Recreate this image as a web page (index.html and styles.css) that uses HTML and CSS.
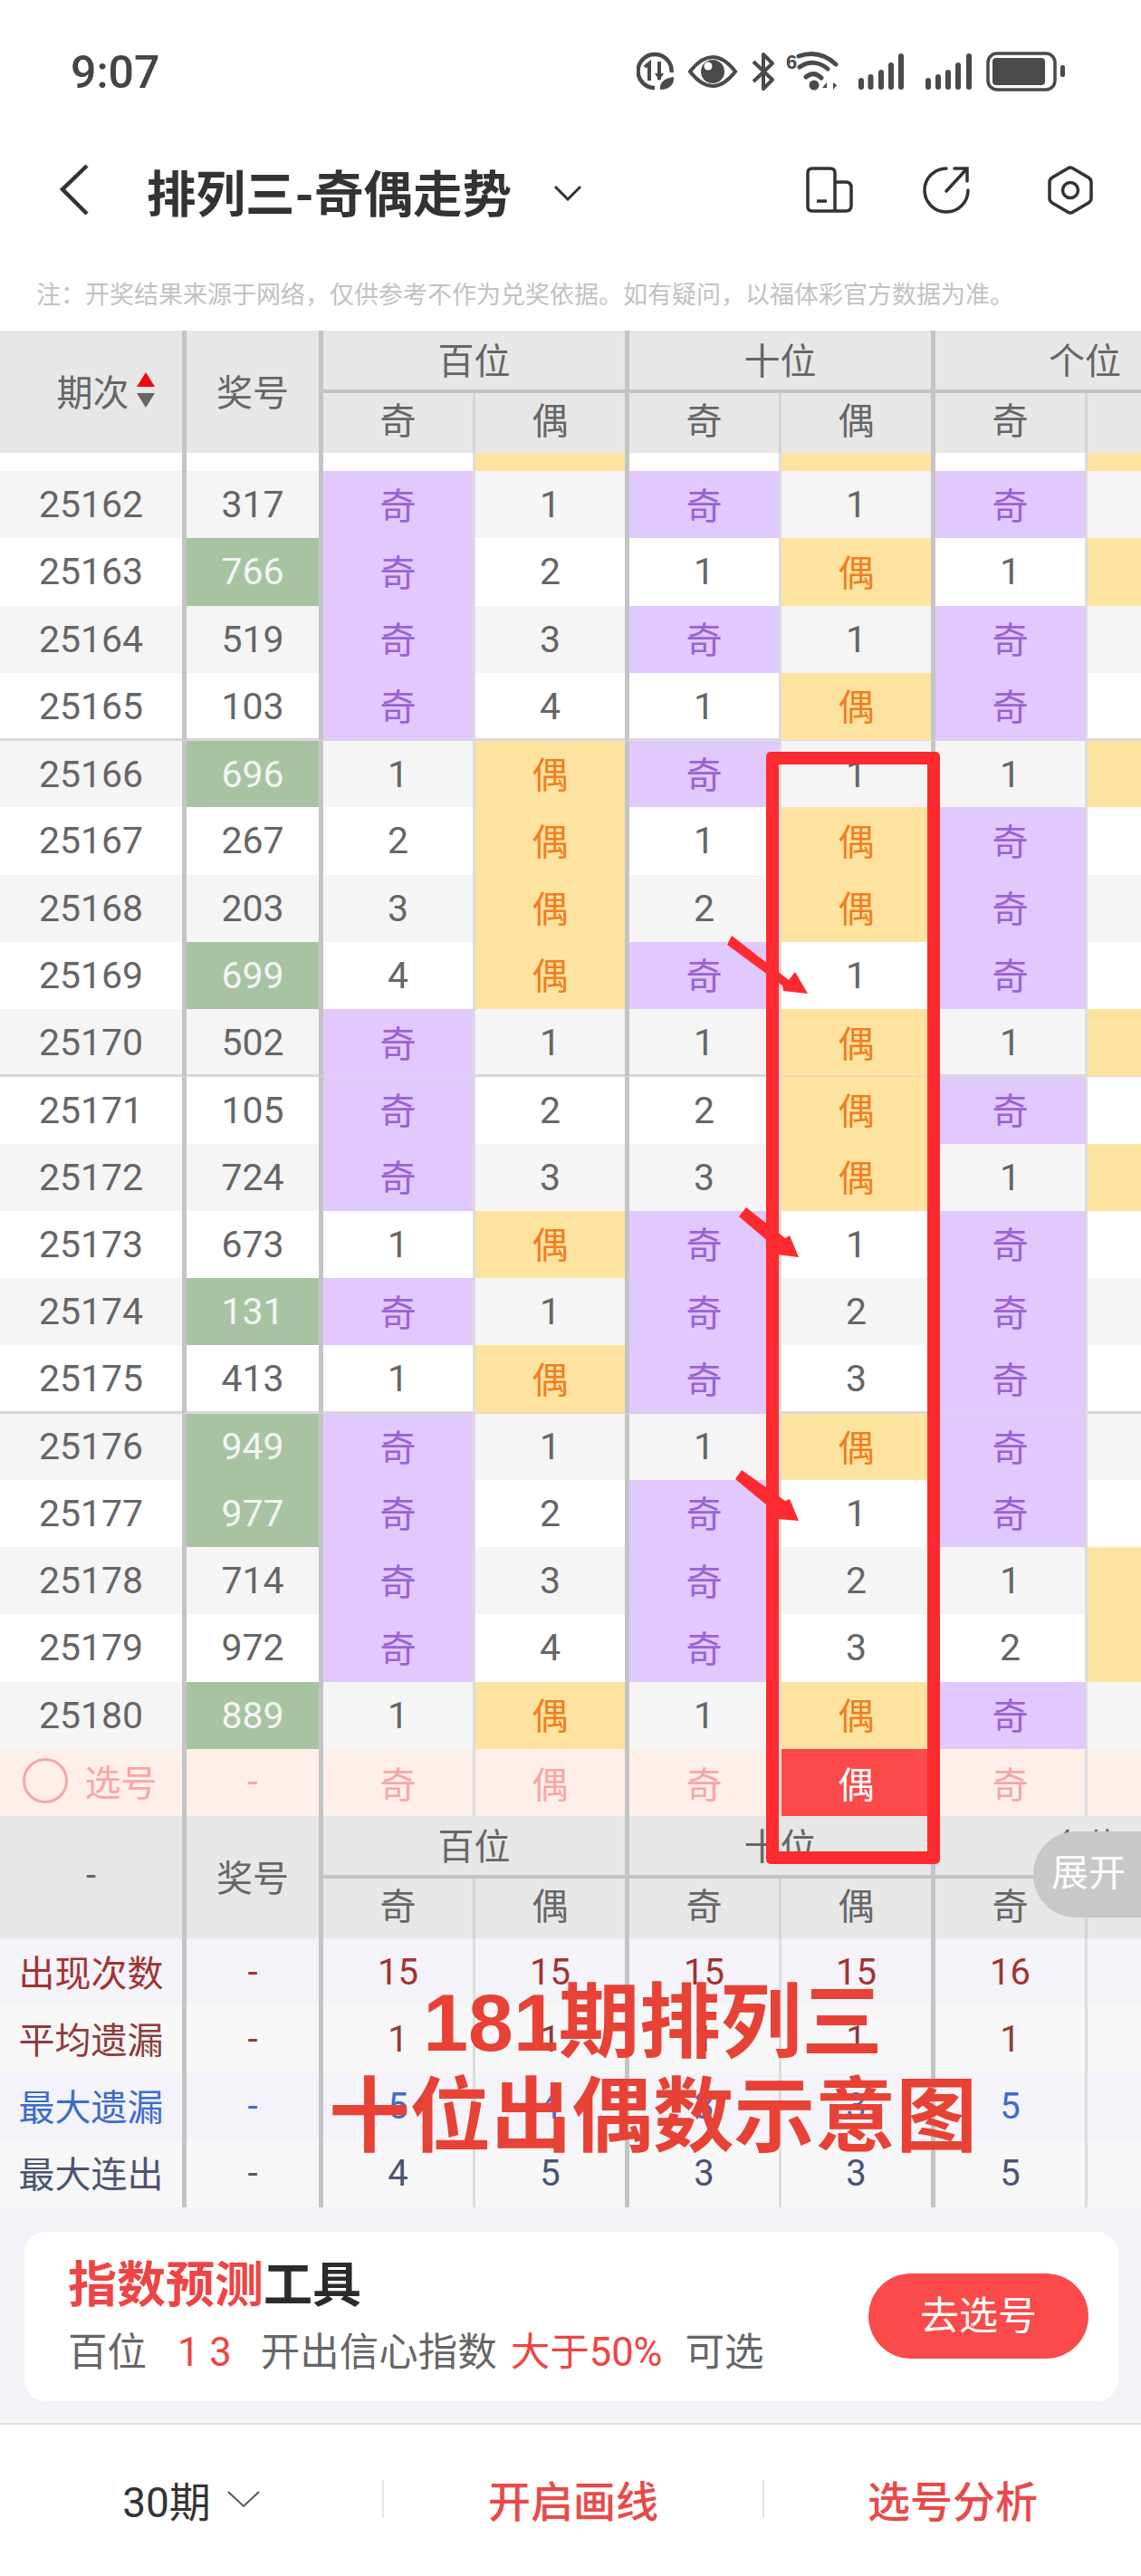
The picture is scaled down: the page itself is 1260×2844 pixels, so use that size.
FILE: index.html
```html
<!DOCTYPE html>
<html lang="zh-CN">
<head>
    <meta charset="UTF-8">
    <meta name="viewport" content="width=device-width, initial-scale=1.0">
    <title>排列三-奇偶走势</title>
    <link rel="stylesheet" href="styles.css">
</head>
<body>
    <div class="status-bar">
        <span class="clock">9:07</span>
        <svg class="status-icons" viewBox="703 54 475 46" width="475" height="46">
            <!-- data saver -->
            <path d="M723 96 A18.5 18.5 0 1 1 741.5 79" fill="none" stroke="#4a4a4a" stroke-width="4.5"/>
            <path d="M712 73 L717 69 V88 M728 67 V87" fill="none" stroke="#4a4a4a" stroke-width="4"/>
            <path d="M723 80 H733 L728 88Z" fill="#4a4a4a"/>
            <path d="M729 98 C728 90 734 85 744 84 C745 92 739 98 729 98Z" fill="#4a4a4a"/>
            <!-- eye -->
            <path d="M762 78 C772 65 780 62 787 62 C794 62 802 65 812 78 C802 91 794 94 787 94 C780 94 772 91 762 78Z" fill="none" stroke="#4a4a4a" stroke-width="4"/>
            <circle cx="787" cy="78" r="13" fill="#4a4a4a"/>
            <circle cx="782" cy="72" r="4.5" fill="#fff"/>
            <!-- bluetooth -->
            <path d="M832 67 L853 87 L843 97 V80 M832 89 L853 69 L843 59 V76" fill="none" stroke="#4a4a4a" stroke-width="4" stroke-linejoin="round"/>
            <!-- wifi -->
            <text x="868" y="75" class="wifi-six">6</text>
            <path d="M882 61 C897 56 911 59 923 70 M883 73 C893 66 905 67 914 75 M890 84 C896 79 902 80 907 85" fill="none" stroke="#4a4a4a" stroke-width="5" stroke-linecap="round"/>
            <circle cx="899" cy="93" r="5.5" fill="#4a4a4a"/>
            <path d="M908 96 L913 90 V96Z M917 90 V98 M920 90 V98 L924 93Z" fill="#4a4a4a"/>
            <!-- signal -->
            <g fill="#4a4a4a">
                <rect x="948" y="85" width="6" height="13" rx="3"/>
                <rect x="958.5" y="81" width="6" height="17" rx="3"/>
                <rect x="970" y="76" width="6" height="22" rx="3"/>
                <rect x="981" y="68" width="6" height="30" rx="3"/>
                <rect x="992" y="58" width="6" height="40" rx="3"/>
                <rect x="1022" y="85" width="6" height="13" rx="3"/>
                <rect x="1033" y="81" width="6" height="17" rx="3"/>
                <rect x="1044" y="76" width="6" height="22" rx="3"/>
                <rect x="1055" y="68" width="6" height="30" rx="3"/>
                <rect x="1067" y="58" width="6" height="40" rx="3"/>
            </g>
            <!-- battery -->
            <rect x="1091" y="58" width="74" height="40" rx="10" fill="none" stroke="#4a4a4a" stroke-width="3.5"/>
            <rect x="1096" y="63" width="58" height="30" rx="4" fill="#4a4a4a"/>
            <rect x="1171" y="71" width="5" height="13" rx="2" fill="#4a4a4a"/>
        </svg>
    </div>

    <div class="nav-bar">
        <svg class="nav-back" viewBox="0 0 34 58" width="34" height="58">
            <path d="M31 2 L4 28 L31 55" fill="none" stroke="#333" stroke-width="4.5"/>
        </svg>
        <h1 class="nav-title">排列三-奇偶走势</h1>
        <svg class="nav-caret" viewBox="0 0 32 18" width="32" height="18">
            <path d="M2 2 L16 16 L30 2" fill="none" stroke="#333" stroke-width="3"/>
        </svg>
        <div class="nav-actions">
            <svg viewBox="889 186 54 54" width="54" height="54">
                <path d="M922 204 H934 Q940 204 940 210 V230 Q940 236 934 236 H897 Q892 236 892 231 V194 Q892 189 897 189 H917 Q922 189 922 194 V236" fill="none" stroke="#333" stroke-width="3.5"/>
                <path d="M902 225 H913" stroke="#333" stroke-width="3.5"/>
            </svg>
            <svg class="nav-share" viewBox="1018 186 54 54" width="54" height="54">
                <path d="M1045 189 A24 24 0 1 0 1069 213" fill="none" stroke="#333" stroke-width="3.5" stroke-linecap="round"/>
                <path d="M1045 214 L1068 189 M1054 189 H1068 V203" fill="none" stroke="#333" stroke-width="3.5" stroke-linecap="round"/>
            </svg>
            <svg viewBox="1155 184 54 56" width="54" height="56">
                <path d="M1179 188 Q1182 186 1185 188 L1202 198 Q1205 200 1205 203 V221 Q1205 224 1202 226 L1185 236 Q1182 238 1179 236 L1162 226 Q1159 224 1159 221 V203 Q1159 200 1162 198Z" fill="none" stroke="#333" stroke-width="3.5"/>
                <circle cx="1182" cy="212" r="8.5" fill="none" stroke="#333" stroke-width="3.5"/>
            </svg>
        </div>
    </div>

    <p class="note">注：开奖结果来源于网络，仅供参考不作为兑奖依据。如有疑问，以福体彩官方数据为准。</p>

    <div class="chart">
        <div class="head">
            <div class="head-side head-sort">期次<span class="sort"><i class="sort-up"></i><i class="sort-down"></i></span></div>
            <div class="head-side">奖号</div>
            <div class="head-group"><div class="group-name">百位</div><div class="group-sub"><span>奇</span><span>偶</span></div></div>
            <div class="head-group"><div class="group-name">十位</div><div class="group-sub"><span>奇</span><span>偶</span></div></div>
            <div class="head-group group-last"><div class="group-name">个位</div><div class="group-sub"><span>奇</span><span></span></div></div>
        </div>

        <div class="rows">
            <div class="row row-cut"><div></div><div></div><div></div><div class="even"></div><div></div><div class="even"></div><div></div><div class="even"></div></div>
            <div class="row"><div>25162</div><div>317</div><div class="odd">奇</div><div>1</div><div class="odd">奇</div><div>1</div><div class="odd">奇</div><div></div></div>
            <div class="row"><div>25163</div><div class="hit">766</div><div class="odd">奇</div><div>2</div><div>1</div><div class="even">偶</div><div>1</div><div class="even"></div></div>
            <div class="row"><div>25164</div><div>519</div><div class="odd">奇</div><div>3</div><div class="odd">奇</div><div>1</div><div class="odd">奇</div><div></div></div>
            <div class="row"><div>25165</div><div>103</div><div class="odd">奇</div><div>4</div><div>1</div><div class="even">偶</div><div class="odd">奇</div><div></div></div>
            <div class="row row-split"><div>25166</div><div class="hit">696</div><div>1</div><div class="even">偶</div><div class="odd">奇</div><div>1</div><div>1</div><div class="even"></div></div>
            <div class="row"><div>25167</div><div>267</div><div>2</div><div class="even">偶</div><div>1</div><div class="even">偶</div><div class="odd">奇</div><div></div></div>
            <div class="row"><div>25168</div><div>203</div><div>3</div><div class="even">偶</div><div>2</div><div class="even">偶</div><div class="odd">奇</div><div></div></div>
            <div class="row"><div>25169</div><div class="hit">699</div><div>4</div><div class="even">偶</div><div class="odd">奇</div><div>1</div><div class="odd">奇</div><div></div></div>
            <div class="row"><div>25170</div><div>502</div><div class="odd">奇</div><div>1</div><div>1</div><div class="even">偶</div><div>1</div><div class="even"></div></div>
            <div class="row row-split"><div>25171</div><div>105</div><div class="odd">奇</div><div>2</div><div>2</div><div class="even">偶</div><div class="odd">奇</div><div></div></div>
            <div class="row"><div>25172</div><div>724</div><div class="odd">奇</div><div>3</div><div>3</div><div class="even">偶</div><div>1</div><div class="even"></div></div>
            <div class="row"><div>25173</div><div>673</div><div>1</div><div class="even">偶</div><div class="odd">奇</div><div>1</div><div class="odd">奇</div><div></div></div>
            <div class="row"><div>25174</div><div class="hit">131</div><div class="odd">奇</div><div>1</div><div class="odd">奇</div><div>2</div><div class="odd">奇</div><div></div></div>
            <div class="row"><div>25175</div><div>413</div><div>1</div><div class="even">偶</div><div class="odd">奇</div><div>3</div><div class="odd">奇</div><div></div></div>
            <div class="row row-split"><div>25176</div><div class="hit">949</div><div class="odd">奇</div><div>1</div><div>1</div><div class="even">偶</div><div class="odd">奇</div><div></div></div>
            <div class="row"><div>25177</div><div class="hit">977</div><div class="odd">奇</div><div>2</div><div class="odd">奇</div><div>1</div><div class="odd">奇</div><div></div></div>
            <div class="row"><div>25178</div><div>714</div><div class="odd">奇</div><div>3</div><div class="odd">奇</div><div>2</div><div>1</div><div class="even"></div></div>
            <div class="row"><div>25179</div><div>972</div><div class="odd">奇</div><div>4</div><div class="odd">奇</div><div>3</div><div>2</div><div class="even"></div></div>
            <div class="row"><div>25180</div><div class="hit">889</div><div>1</div><div class="even">偶</div><div>1</div><div class="even">偶</div><div class="odd">奇</div><div></div></div>
        </div>

        <div class="row row-pick">
            <div class="pick-label"><i class="pick-circle"></i>选号</div>
            <div>-</div><div>奇</div><div>偶</div><div>奇</div><div class="picked">偶</div><div>奇</div><div></div>
        </div>

        <div class="head head-foot">
            <div class="head-side">-</div>
            <div class="head-side">奖号</div>
            <div class="head-group"><div class="group-name">百位</div><div class="group-sub"><span>奇</span><span>偶</span></div></div>
            <div class="head-group"><div class="group-name">十位</div><div class="group-sub"><span>奇</span><span>偶</span></div></div>
            <div class="head-group group-last"><div class="group-name">个位</div><div class="group-sub"><span>奇</span><span></span></div></div>
        </div>

        <div class="row stat stat-count"><div>出现次数</div><div>-</div><div>15</div><div>15</div><div>15</div><div>15</div><div>16</div><div></div></div>
        <div class="row stat stat-avg"><div>平均遗漏</div><div>-</div><div>1</div><div>1</div><div>1</div><div>1</div><div>1</div><div></div></div>
        <div class="row stat stat-max"><div>最大遗漏</div><div>-</div><div>5</div><div>4</div><div>3</div><div>3</div><div>5</div><div></div></div>
        <div class="row stat stat-run"><div>最大连出</div><div>-</div><div>4</div><div>5</div><div>3</div><div>3</div><div>5</div><div></div></div>
    </div>

    <div class="tool-area">
        <div class="tool-card">
            <div class="tool-text">
                <div class="tool-title"><em>指数预测</em>工具</div>
                <div class="tool-desc">百位<em class="tool-nums">1 3</em>开出信心指数<em class="tool-rate">大于50%</em>可选</div>
            </div>
            <div class="tool-btn">去选号</div>
        </div>
    </div>

    <div class="bottom-bar">
        <div class="bottom-item">30期
            <svg viewBox="0 0 36 20" width="36" height="20"><path d="M1 2 L18 18 L35 2" fill="none" stroke="#555" stroke-width="2"/></svg>
        </div>
        <div class="bottom-item bottom-red">开启画线</div>
        <div class="bottom-item bottom-red">选号分析</div>
    </div>

    <!-- marks drawn on top of the screenshot -->
    <div class="expand-tab">展开</div>
    <div class="mark-box"></div>
    <svg class="mark-arrows" viewBox="0 0 1260 2844" width="1260" height="2844">
        <path d="M808 1033 L871 1082 L878 1073 L892 1097 L865 1094 L864 1088 L803 1043Z"/>
        <path d="M824 1333 L867 1367 L872 1364 L882 1388 L858 1385 L857 1378 L816 1343Z"/>
        <path d="M819 1623 L867 1657 L872 1655 L882 1679 L859 1677 L858 1671 L812 1633Z"/>
    </svg>
    <div class="mark-caption">181期排列三<br>十位出偶数示意图</div>
</body>
</html>
```

FILE: styles.css
```css
* {
    box-sizing: border-box;
}
body {
    position: relative;
    margin: 0;
    width: 1260px;
    height: 2844px;
    overflow: hidden;
    background: #fff;
    font-family: Roboto, "Noto Sans CJK SC", sans-serif;
    color: #666;
}
em, i {
    font-style: normal;
}

/* status bar */
.status-bar {
    display: flex;
    justify-content: space-between;
    align-items: center;
    height: 156px;
    padding: 0 82px 0 78px;
}
.clock {
    padding-top: 3px;
    font-size: 50px;
    font-weight: 500;
    color: #444;
}
.status-icons {
    display: block;
}
.wifi-six {
    font-family: "Liberation Sans", sans-serif;
    font-size: 22px;
    font-weight: 700;
    fill: #4a4a4a;
}

/* title bar */
.nav-bar {
    display: flex;
    align-items: center;
    height: 108px;
    padding: 0 51px 0 65px;
}
.nav-back {
    margin-right: 63px;
}
.nav-title {
    margin: 0;
    font-size: 54.5px;
    font-weight: 700;
    color: #333;
}
.nav-caret {
    margin: 6px 0 0 46px;
}
.nav-actions {
    display: flex;
    align-items: center;
    gap: 75px;
    margin-left: auto;
}
.nav-share {
    margin-right: 8px;
}
.note {
    margin: 0;
    height: 101px;
    padding: 42px 0 0 40px;
    font-size: 27px;
    line-height: 40px;
    color: #c2c2c2;
}

/* trend table */
.head {
    display: grid;
    grid-template-columns: 206px 151px 338px 338px 227px;
    height: 135px;
    background: #e7e7e7;
    font-size: 40px;
}
.head-side {
    display: flex;
    align-items: center;
    justify-content: center;
    padding-bottom: 4px;
    border-right: 5px solid #c4c4c4;
}
.head-sort {
    padding-left: 32px;
}
.head-group {
    display: flex;
    flex-direction: column;
    border-right: 5px solid #c4c4c4;
}
.group-name {
    display: flex;
    align-items: center;
    justify-content: center;
    height: 69px;
    padding-bottom: 3px;
    border-bottom: 4px solid #c4c4c4;
}
.group-sub {
    display: grid;
    grid-template-columns: 168px 1fr;
    flex: 1;
    text-align: center;
    line-height: 64px;
}
.group-sub span:first-child {
    border-right: 3px solid #d4d4d4;
}
.group-last {
    border-right: 0;
}
.group-last .group-name {
    padding-left: 103px;
}
.sort {
    display: flex;
    flex-direction: column;
    gap: 7px;
    margin-left: 8px;
}
.sort-up {
    border: 10px solid transparent;
    border-top: 0;
    border-bottom: 16px solid #ee0a0a;
}
.sort-down {
    border: 10px solid transparent;
    border-bottom: 0;
    border-top: 16px solid #666;
}

.row {
    display: grid;
    grid-template-columns: 206px 151px 168px 170px 168px 170px 168px 1fr;
    height: 74.25px;
    font-size: 41px;
    background: #fff;
}
.row > div {
    display: flex;
    align-items: center;
    justify-content: center;
    border-right: 5px solid #c4c4c4;
}
.row > div:nth-child(n+3):nth-child(odd) {
    border-right: 3px solid #dcdcdc;
}
.row > div:last-child {
    border-right: 0;
}
.rows .row:nth-child(even) {
    background: #f5f5f5;
}
.rows .row-cut {
    height: 20px;
}
.row-split {
    height: 76.25px;
    margin-top: -2px;
    border-top: 3px solid #d8d8d8;
}
.row > .odd {
    padding-bottom: 3px;
    background: #e1c8fd;
    color: #9b62d4;
    font-size: 40px;
}
.row > .even {
    padding-bottom: 3px;
    background: #fee3a0;
    color: #f07f1e;
    font-size: 40px;
}
.row > .hit {
    background: #a8c3a2;
    color: #f4f4f4;
}

.row-pick {
    background: #ffefe9;
    color: #f8a6a6;
    font-size: 40px;
}
.row-pick > .pick-label {
    gap: 19px;
    padding-right: 3px;
    padding-bottom: 3px;
}
.pick-circle {
    width: 50px;
    height: 50px;
    border: 3px solid #f8a6a6;
    border-radius: 50%;
}
.row-pick > .picked {
    background: #fb4a4a;
    color: #fff;
}

/* summary rows */
.stat {
    background: #f7f7f7;
    font-size: 40px;
}
.stat > div:first-child {
    padding-bottom: 3px;
}
.stat-count {
    background: #f3f3f9;
    color: #a23232;
}
.stat-avg {
    color: #8c3c3c;
}
.stat-max {
    background: #f3f3f9;
    color: #3f6cc8;
}
.stat-run {
    color: #4b556f;
}

/* tool card */
.tool-area {
    height: 240px;
    padding: 27px 25px 26px 27px;
    background: #f2f3f7;
    border-bottom: 2px solid #dedede;
}
.tool-card {
    display: flex;
    align-items: center;
    justify-content: space-between;
    height: 187px;
    padding: 0 33px 0 48px;
    border-radius: 24px;
    background: #fff;
}
.tool-title {
    font-size: 54px;
    font-weight: 700;
    line-height: 72px;
    color: #2b2b2b;
}
.tool-title em {
    color: #ee4444;
}
.tool-desc {
    margin-top: 9px;
    font-size: 43.5px;
    line-height: 58px;
    white-space: nowrap;
}
.tool-nums {
    margin: 0 32px 0 34px;
    color: #ee4444;
}
.tool-rate {
    margin: 0 25px 0 15px;
    color: #ee4444;
}
.tool-btn {
    width: 243px;
    height: 94px;
    margin-top: -2px;
    border-radius: 47px;
    background: #fb4a4a;
    color: #fff;
    font-size: 43px;
    line-height: 94px;
    text-align: center;
}

/* bottom actions */
.bottom-bar {
    display: grid;
    grid-template-columns: 422px 420px 418px;
    align-items: center;
    height: 167px;
    padding-bottom: 4px;
}
.bottom-item {
    display: flex;
    align-items: center;
    justify-content: center;
    gap: 18px;
    height: 42px;
    font-size: 46px;
    color: #333;
}
.bottom-item + .bottom-item {
    border-left: 2px solid #e4e4e4;
}
.bottom-red {
    color: #e84a4a;
    font-size: 47px;
    font-weight: 500;
}

/* overlays */
.expand-tab {
    position: absolute;
    left: 1141px;
    top: 2022px;
    width: 119px;
    height: 95px;
    padding-left: 20px;
    border-radius: 47px 0 0 47px;
    background: #c8c8c8;
    color: #fff;
    font-size: 41px;
    line-height: 92px;
}
.mark-box {
    position: absolute;
    left: 846px;
    top: 830px;
    width: 192px;
    height: 1228px;
    border: 14px solid #fd2a2f;
    border-radius: 5px;
}
.mark-arrows {
    position: absolute;
    left: 0;
    top: 0;
    fill: #fd2a2f;
}
.mark-caption {
    position: absolute;
    left: 0;
    top: 2181px;
    width: 1260px;
    padding-left: 182px;
    font-family: "Liberation Sans", "Noto Sans CJK SC", sans-serif;
    font-size: 89.5px;
    font-weight: 700;
    line-height: 104px;
    color: #e74235;
    text-align: center;
}
```
